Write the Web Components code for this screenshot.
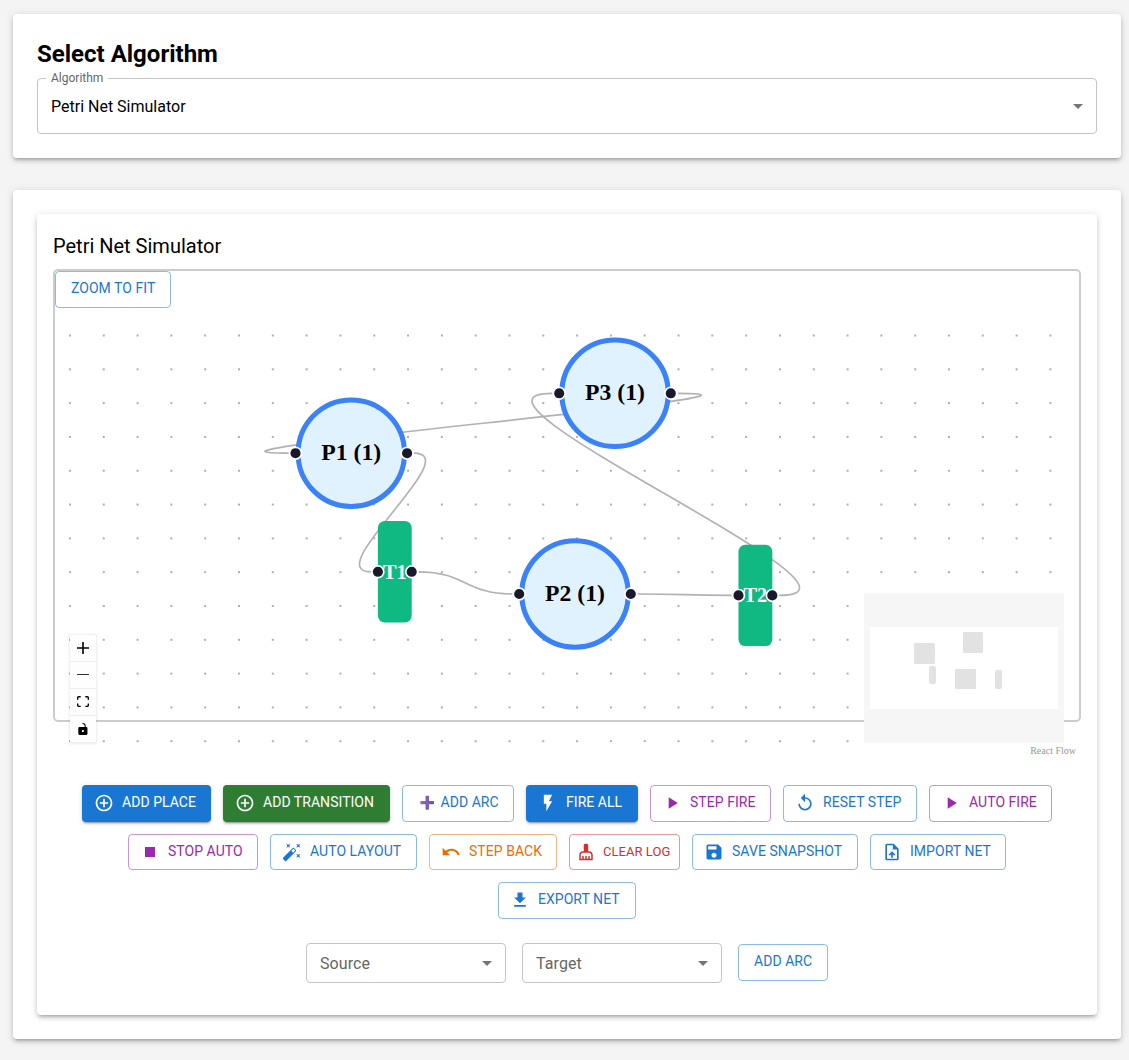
<!DOCTYPE html>
<html lang="en">
<head>
<meta charset="utf-8">
<title>Petri Net Simulator</title>
<style>
html,body{margin:0;background:#f4f4f4}
body{font-family:Roboto,"Liberation Sans",sans-serif;color:#000}
main{display:flex;flex-direction:column;gap:32px;padding:14px 8px 21px 13px}
</style>
</head>
<body>
<main>
  <paper-card style="height:96px">
    <algorithm-picker></algorithm-picker>
  </paper-card>
  <paper-card style="height:801px">
    <petri-simulator></petri-simulator>
  </paper-card>
</main>
<script>
const define = (name, html, setup) => {
  const t = document.createElement('template');
  t.innerHTML = html;
  customElements.define(name, class extends HTMLElement {
    connectedCallback() {
      if (this.shadowRoot) return;
      this.attachShadow({mode: 'open'}).append(t.content.cloneNode(true));
      if (setup) setup(this, this.shadowRoot);
    }
  });
};

const ICONS = {
  add: 'M13 7h-2v4H7v2h4v4h2v-4h4v-2h-4V7zm-1-5C6.48 2 2 6.48 2 12s4.48 10 10 10 10-4.48 10-10S17.52 2 12 2zm0 18c-4.41 0-8-3.59-8-8s3.59-8 8-8 8 3.59 8 8-3.59 8-8 8z',
  flash: 'M7 2v11h3v9l7-12h-4l4-8z',
  play: 'M8 5v14l11-7z',
  restart: 'M12 5V1L7 6l5 5V7c3.31 0 6 2.69 6 6s-2.69 6-6 6-6-2.69-6-6H4c0 4.42 3.58 8 8 8s8-3.58 8-8-3.58-8-8-8z',
  stop: 'M6 6h12v12H6z',
  wand: 'M7.5 5.6 10 7 8.6 4.5 10 2 7.5 3.4 5 2l1.4 2.5L5 7zm12 9.8L17 14l1.4 2.5L17 19l2.5-1.4L22 19l-1.4-2.5L22 14zM22 2l-2.5 1.4L17 2l1.4 2.5L17 7l2.5-1.4L22 7l-1.4-2.5zm-7.63 5.29a.9959.9959 0 0 0-1.41 0L1.29 18.96c-.39.39-.39 1.02 0 1.41l2.34 2.34c.39.39 1.02.39 1.41 0L16.7 11.05c.39-.39.39-1.02 0-1.41l-2.33-2.35zm-1.03 5.49-2.12-2.12 2.44-2.44 2.12 2.12-2.44 2.44z',
  undo: 'M12.5 8c-2.65 0-5.05.99-6.9 2.6L2 7v9h9l-3.62-3.62c1.39-1.16 3.16-1.88 5.12-1.88 3.54 0 6.55 2.31 7.6 5.5l2.37-.78C21.08 11.03 17.15 8 12.5 8z',
  clean: 'M16 11h-1V3c0-1.1-.9-2-2-2h-2c-1.1 0-2 .9-2 2v8H8c-2.76 0-5 2.24-5 5v7h18v-7c0-2.76-2.24-5-5-5zm3 10h-2v-3c0-.55-.45-1-1-1s-1 .45-1 1v3h-2v-3c0-.55-.45-1-1-1s-1 .45-1 1v3H9v-3c0-.55-.45-1-1-1s-1 .45-1 1v3H5v-5c0-1.65 1.35-3 3-3h8c1.65 0 3 1.35 3 3v5z',
  save: 'M17 3H5c-1.11 0-2 .9-2 2v14c0 1.1.89 2 2 2h14c1.1 0 2-.9 2-2V7l-4-4zm-5 16c-1.66 0-3-1.34-3-3s1.34-3 3-3 3 1.34 3 3-1.34 3-3 3zm3-10H5V5h10v4z',
  upload: 'M14 2H6c-1.1 0-1.99.9-1.99 2L4 20c0 1.1.89 2 1.99 2H18c1.1 0 2-.9 2-2V8l-6-6zm4 18H6V4h7v5h5v11zM8 15.01l1.41 1.41L11 14.84V19h2v-4.16l1.59 1.59L16 15.01 12.01 11 8 15.01z',
  download: 'M19 9h-4V3H9v6H5l7 7 7-7zM5 18v2h14v-2H5z'
};

define('paper-card', `
<style>
:host{display:block;padding:24px;background:#fff;border-radius:4px;box-shadow:0 3px 3px -2px rgba(0,0,0,.2),0 3px 4px 0 rgba(0,0,0,.14),0 1px 8px 0 rgba(0,0,0,.12)}
</style><slot></slot>`);

define('select-box', `
<style>
:host{display:block}
fieldset{box-sizing:border-box;height:100%;margin:0;padding:0 13px;border:1px solid #c4c4c4;border-radius:4px;display:flex;align-items:center;justify-content:space-between;font-size:16px;position:relative}
.text{padding-top:var(--drop,0);letter-spacing:var(--track,0)}
svg{width:24px;height:24px;fill:#757575;margin-right:-7px}
.label{position:absolute;left:8px;top:-8px;padding:0 5px;background:#fff;color:#666;font-size:12px;line-height:14px}
.label:empty{display:none}
</style>
<fieldset><span class="label"></span><span class="text"><slot></slot></span><svg viewBox="0 0 24 24"><path d="M7 10l5 5 5-5z"/></svg></fieldset>`,
(el, root) => { root.querySelector('.label').textContent = el.getAttribute('label') || ''; });

define('algorithm-picker', `
<style>
:host{display:block}
h2{margin:0;height:40px;font-size:24px;line-height:32px;font-weight:700}
select-box{height:56px}
</style>
<h2>Select Algorithm</h2>
<select-box label="Algorithm">Petri Net Simulator</select-box>`);

define('action-button', `
<style>
:host{display:block;box-sizing:border-box;height:36.5px;--c:25,118,210;color:rgb(var(--c));border:1px solid rgba(var(--c),.5);border-radius:4px;padding:0 15px;font-size:14px;font-weight:400;letter-spacing:.04px}
:host([tone=green]){--c:46,125,50}
:host([tone=purple]){--c:156,39,176}
:host([tone=orange]){--c:237,108,2}
:host([tone=red]){--c:211,47,47}
:host([filled]){background:rgb(var(--c));color:#fff;border:0;padding:0 16px;box-shadow:0 3px 1px -2px rgba(0,0,0,.2),0 2px 2px 0 rgba(0,0,0,.14),0 1px 5px 0 rgba(0,0,0,.12)}
:host([small]){padding:0 9px;font-size:13px}
div{height:100%;display:flex;align-items:center;white-space:nowrap}
span{position:relative;top:var(--lift,-1px)}
:host([small]) span{top:0}
svg{flex:none;width:20px;height:20px;margin:0 8px 0 -4px;fill:currentColor}
:host([small]) svg{width:18px;height:18px;margin-left:-2px}
svg.plus{width:19px;height:16px;margin:0 3.500px 0 0}
</style>
<div><span><slot></slot></span></div>`,
(el, root) => {
  const icon = el.getAttribute('icon');
  if (!icon) return;
  root.querySelector('div').insertAdjacentHTML('afterbegin', icon === 'plus'
    ? `<svg class="plus" viewBox="0 0 19 16"><defs><linearGradient id="g" x2="1"><stop stop-color="#8d70c4"/><stop offset="1" stop-color="#6a4fae"/></linearGradient></defs><path fill="url(#g)" d="M7.500 1.500q0-.8.8-.8h1.900q.8 0 .8.8V6h4.300q.7 0 .7.7v1.900q0 .7-.7.7H11v4.600q0 .8-.8.8H8.300q-.8 0-.8-.8V9.300H3q-.7 0-.7-.7V6.700q0-.7.7-.7h4.500z"/></svg>`
    : `<svg viewBox="0 0 24 24"><path d="${ICONS[icon]}"/></svg>`);
});

define('flow-node', `
<style>
:host{display:block;position:absolute;left:0;top:0;font-family:"Liberation Serif",serif;font-weight:700;text-align:center}
.body{box-sizing:border-box;display:flex;align-items:center;justify-content:center;width:66px;height:66px;border:3px solid #3b82f6;border-radius:50%;background:#e0f2fe;font-size:14px;line-height:16px}
:host([kind=transition]) .body{width:20px;height:60px;border:0;border-radius:4px;background:#10b981;color:#fff;font-size:12px}
i{position:absolute;top:50%;width:6px;height:6px;border:1px solid #fff;border-radius:50%;background:#1a192b;transform:translateY(-50%)}
.in{left:-4px}.out{right:-4px}
</style>
<div class="body"><slot></slot></div><i class="in"></i><i class="out"></i>`);

define('flow-canvas', `
<style>
:host{display:block;position:relative;height:450px;width:100%}
svg.back{position:absolute;inset:0;width:100%;height:100%}
.view{position:absolute;left:0;top:0;transform-origin:0 0;transform:scale(1.6905)}
</style>
<svg class="back"><defs><pattern id="dots" x="-1.950" y="10.600" width="33.81" height="33.81" patternUnits="userSpaceOnUse"><circle cx="16.9" cy="16.9" r=".9" fill="#88888f"/></pattern></defs>
<rect width="100%" height="100%" fill="url(#dots)"/><g id="edges" fill="none" stroke="#b1b1b7" stroke-width="1.69"></g></svg>
<div class="view"></div><slot></slot>`,
(el, root) => {
  const zoom = 1.6905;
  const nodes = {
    P1: {x: 296.3, y: 145.2, w: 33, h: 33, label: 'P1 (1)'},
    P2: {x: 520.0, y: 286.0, w: 33, h: 33, label: 'P2 (1)'},
    P3: {x: 560.0, y: 85.3, w: 33, h: 33, label: 'P3 (1)'},
    T1: {x: 339.8, y: 263.8, w: 10, h: 30, label: 'T1'},
    T2: {x: 700.4, y: 287.4, w: 10, h: 30, label: 'T2'}
  };
  const view = root.querySelector('.view');
  for (const [id, n] of Object.entries(nodes)) {
    const e = document.createElement('flow-node');
    e.setAttribute('kind', id[0] === 'T' ? 'transition' : 'place');
    e.textContent = n.label;
    e.style.transform = `translate(${n.x / zoom - n.w}px,${n.y / zoom - n.h}px)`;
    view.append(e);
  }
  const edges = [['P1', 'T1'], ['T1', 'P2'], ['P2', 'T2'], ['T2', 'P3'], ['P3', 'P1']];
  root.querySelector('#edges').innerHTML = edges.map(([a, b]) => {
    const s = nodes[a], t = nodes[b];
    const sx = s.x + (s.w + 4) * zoom, tx = t.x - (t.w + 4) * zoom, d = (tx - sx) / zoom;
    const off = zoom * (d >= 0 ? d / 2 : 6.25 * Math.sqrt(-d));
    return `<path d="M${sx},${s.y} C${sx + off},${s.y} ${tx - off},${t.y} ${tx},${t.y}"/>`;
  }).join('');
});

define('flow-controls', `
<style>
:host{display:block;position:absolute;left:15px;bottom:15px;box-shadow:0 0 2px 1px rgba(0,0,0,.08)}
div{width:16px;height:16px;padding:5px;background:#fefefe;border-bottom:1px solid #eee;display:flex;align-items:center;justify-content:center}
svg{width:100%;max-width:12px;max-height:12px}
</style>
<div><svg viewBox="0 0 32 32"><path d="M32 18.133H18.133V32h-4.266V18.133H0v-4.266h13.867V0h4.266v13.867H32z"/></svg></div>
<div><svg viewBox="0 0 32 5"><path d="M0 .5h32V5H0z"/></svg></div>
<div><svg viewBox="0 0 32 30"><path d="M3.692 4.63c0-.53.4-.938.939-.938h5.215V0H4.708C2.13 0 0 2.054 0 4.63v5.216h3.692V4.631zM27.354 0h-5.2v3.692h5.17c.53 0 .984.4.984.939v5.215H32V4.631A4.624 4.624 0 0027.354 0zm.954 24.83c0 .532-.4.94-.939.94h-5.215v3.768h5.215c2.577 0 4.631-2.13 4.631-4.707v-5.139h-3.692v5.139zm-23.677.94a.919.919 0 01-.939-.94v-5.138H0v5.139c0 2.577 2.13 4.707 4.708 4.707h5.138V25.77H4.631z"/></svg></div>
<div><svg viewBox="0 0 25 32"><path d="M21.333 10.667H19.81V7.619C19.81 3.429 16.38 0 12.19 0c-4.114 1.828-1.37 2.133.305 2.438 1.676.305 4.42 2.59 4.42 5.181v3.048H3.047A3.056 3.056 0 000 13.714v15.238A3.056 3.056 0 003.048 32h18.285a3.056 3.056 0 003.048-3.048V13.714a3.056 3.056 0 00-3.048-3.047zM12.19 24.533a3.056 3.056 0 01-3.047-3.047 3.056 3.056 0 013.047-3.048 3.056 3.056 0 013.048 3.048 3.056 3.056 0 01-3.048 3.047z"/></svg></div>`);

define('flow-minimap', `
<style>:host{display:block;position:absolute;right:15px;bottom:15px;width:200px;height:150px}svg{display:block}</style>
<svg width="200" height="150"><path fill="#fff" d="M0 0h200v150H0z"/>
<g fill="#e2e2e2"><rect x="50" y="50" width="21" height="21" rx="1.500"/><rect x="99" y="39" width="20" height="21" rx="1"/><rect x="65" y="73" width="7" height="18" rx="2"/><rect x="91" y="76" width="21" height="20" rx="1"/><rect x="131" y="77" width="7" height="19" rx="2"/></g>
<path fill="#f6f6f6" fill-rule="evenodd" d="M0 0h200v150H0zM6 34v82h188V34z"/></svg>`);

define('petri-simulator', `
<style>
:host{display:block;box-sizing:border-box;height:801px;padding:16px;background:#fff;border-radius:4px;box-shadow:0 3px 3px -2px rgba(0,0,0,.2),0 3px 4px 0 rgba(0,0,0,.14),0 1px 8px 0 rgba(0,0,0,.12)}
h3{margin:0 0 7px;font-size:20px;line-height:32px;font-weight:400}
.frame{box-sizing:border-box;height:453px;border:2px solid #ccc;border-radius:5px}
.fit{width:116px}
.credit{position:absolute;right:0;bottom:-1px;padding:2px 3px;font:10px/12px "Liberation Serif",serif;color:#999}
.tools{display:flex;flex-wrap:wrap;justify-content:center;gap:12px;padding:0 4px;margin-top:63px}
.arc{display:flex;align-items:center;justify-content:center;gap:16px;margin-top:24px}
.arc select-box{width:200px;height:40px;color:#666;--drop:1.500px;--track:.1px}
.arc action-button{width:90px;--lift:-1.600px}
</style>
<h3>Petri Net Simulator</h3>
<div class="frame">
  <action-button class="fit">ZOOM TO FIT</action-button>
  <flow-canvas><flow-controls></flow-controls><flow-minimap></flow-minimap><span class="credit">React Flow</span></flow-canvas>
</div>
<div class="tools">
  <action-button filled icon="add" style="width:129px">ADD PLACE</action-button>
  <action-button filled tone="green" icon="add" style="width:167px">ADD TRANSITION</action-button>
  <action-button icon="plus" style="width:112px">ADD ARC</action-button>
  <action-button filled icon="flash" style="width:112px">FIRE ALL</action-button>
  <action-button tone="purple" icon="play" style="width:121px">STEP FIRE</action-button>
  <action-button icon="restart" style="width:134px">RESET STEP</action-button>
  <action-button tone="purple" icon="play" style="width:123px">AUTO FIRE</action-button>
  <action-button tone="purple" icon="stop" style="width:130px">STOP AUTO</action-button>
  <action-button icon="wand" style="width:147px">AUTO LAYOUT</action-button>
  <action-button tone="orange" icon="undo" style="width:128px">STEP BACK</action-button>
  <action-button tone="red" small icon="clean" style="width:111px">CLEAR LOG</action-button>
  <action-button icon="save" style="width:166px">SAVE SNAPSHOT</action-button>
  <action-button icon="upload" style="width:136px">IMPORT NET</action-button>
  <action-button icon="download" style="width:138px">EXPORT NET</action-button>
</div>
<div class="arc">
  <select-box>Source</select-box>
  <select-box>Target</select-box>
  <action-button>ADD ARC</action-button>
</div>`);
</script>
</body>
</html>
